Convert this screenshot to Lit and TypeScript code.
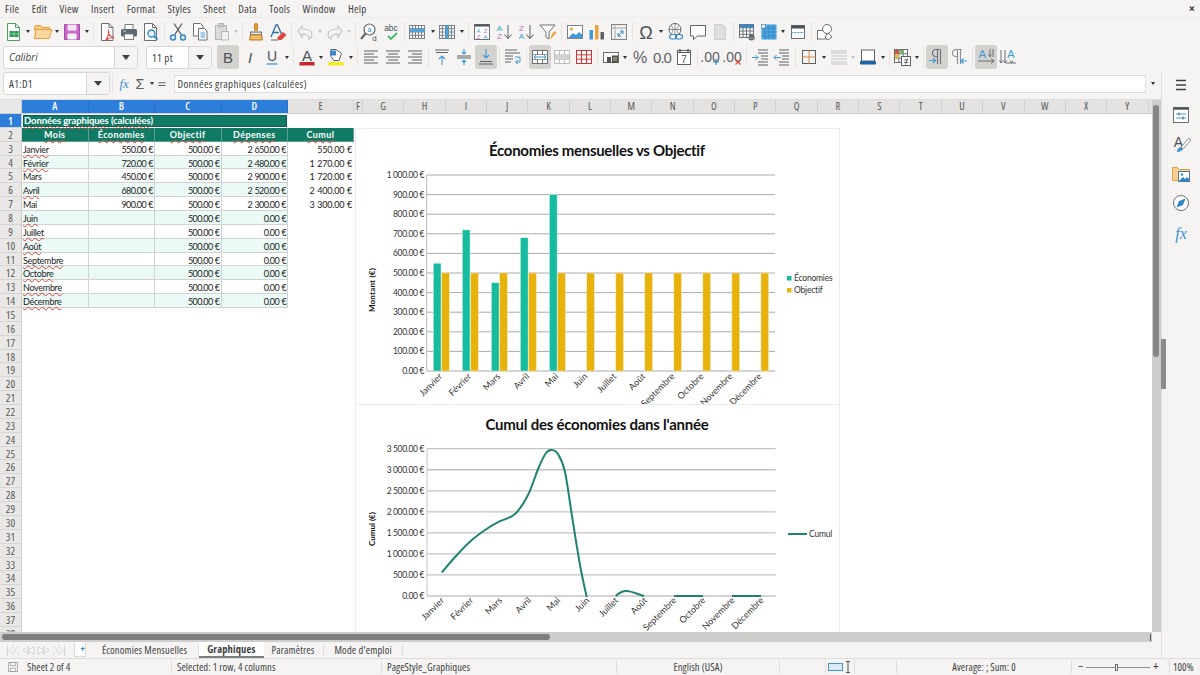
import { LitElement, css, html, svg } from 'lit'
import { customElement } from 'lit/decorators.js'

const GREY = '#5c6166'
const BLUE = '#3f9ad6'

// horizontal text lines used by the alignment style icons
const lines = (rows: [number, number, number][], color = GREY) =>
  rows.map(([a, b, y]) => svg`<path d="M${a} ${y}H${b}" stroke=${color} stroke-width="1"/>`)

const gridCells = (x: number, y: number, w: number, h: number, cols: number, rows: number, color: string) => svg`
  <rect x=${x} y=${y} width=${w} height=${h} fill="#fff" stroke=${color}/>
  ${Array.from({ length: cols - 1 }, (_, i) => svg`<path d="M${x + ((i + 1) * w) / cols} ${y}v${h}" stroke=${color}/>`)}
  ${Array.from({ length: rows - 1 }, (_, i) => svg`<path d="M${x} ${y + ((i + 1) * h) / rows}h${w}" stroke=${color}/>`)}
`

const label = (x: number, y: number, size: number, color: string, t: string, extra = '') =>
  svg`<text x=${x} y=${y} font-size=${size} fill=${color} font-family="Liberation Sans, sans-serif" font-style=${extra === 'i' ? 'italic' : 'normal'} font-weight=${extra === 'b' ? 'bold' : 'normal'} text-anchor="middle">${t}</text>`

const icons: Record<string, unknown> = {
  new: svg`<path d="M4.5 1.5h8l4 4v13h-12z" fill="#fff" stroke="#4f9f62"/><path d="M12.5 1.5v4h4" fill="none" stroke="#4f9f62"/><rect x="6.5" y="9" width="9" height="6" fill="#2f9a52"/><path d="M7 12h8M11 9v6" stroke="#a8dcb6" stroke-width=".7"/>`,
  open: svg`<path d="M1.5 5.5l1-2h5l2 2h7v3h-15z" fill="#f6c684" stroke="#e39f3a"/><path d="M1.5 16.5l1.5-9h16l-3 9z" fill="#fbd79f" stroke="#e39f3a"/>`,
  save: svg`<path d="M2.5 2.5h15v15h-15z" fill="#c76ac9" stroke="#a84cab"/><rect x="5.5" y="2.5" width="9" height="6" fill="#f4e3f4"/><rect x="5.5" y="11.5" width="9" height="6" fill="#f9f0f9"/>`,
  pdf: svg`<path d="M4.5 1.5h7.5l4 4v13h-11.500z" fill="#fff" stroke="#6b7075"/><path d="M12 1.500v4h4" fill="none" stroke="#6b7075"/><path d="M9 18c2-3 3-7 2.500-9-1 3 2 6 5.500 6.500-3 0-6 1-8 2.500z" fill="none" stroke="#d9463e" stroke-width="1.200"/>`,
  print: svg`<rect x="6" y="2.500" width="8" height="5" fill="#fff" stroke="#7a7f84"/><rect x="2" y="7" width="16" height="7.500" rx="1.500" fill="#5e6a73"/><rect x="5.500" y="12" width="9" height="5.500" fill="#fff" stroke="#7a7f84"/><path d="M4 9h3" stroke="#cfd3d6"/>`,
  preview: svg`<path d="M3.500 1.500h8l4 4v13h-12z" fill="#fff" stroke="#6b7075"/><path d="M11.500 1.500v4h4" fill="none" stroke="#6b7075"/><circle cx="10.500" cy="11.500" r="3.500" fill="#e7f3fb" stroke="#2f86c4" stroke-width="1.300"/><path d="M13 14l3.500 3.500" stroke="#2f86c4" stroke-width="1.800"/>`,
  cut: svg`<path d="M6 1.500l7.500 11.500M14 1.500L6.500 13" stroke="#4b5157" stroke-width="1.200" fill="none"/><circle cx="5" cy="15.500" r="2.500" fill="none" stroke="#2f86c4" stroke-width="1.400"/><circle cx="15" cy="15.500" r="2.500" fill="none" stroke="#2f86c4" stroke-width="1.400"/>`,
  copy: svg`<path d="M3.500 1.500h7l2.500 2.500v10h-9.500z" fill="#fff" stroke="#6b7075"/><path d="M8.500 6.500h6l2.500 2.500v9h-8.500z" fill="#fff" stroke="#6b7075"/><path d="M10.500 11h4.500M10.500 13h4.500M10.500 15h4.500" stroke="#3f9ad6"/>`,
  paste: svg`<rect x="3.500" y="3.500" width="11" height="14" fill="#dcdcda" stroke="#b5b5b3"/><rect x="6.500" y="1.500" width="5" height="3.500" fill="#c8c8c6" stroke="#b5b5b3"/><rect x="9.500" y="9.500" width="7" height="8.500" fill="#f1f1f0" stroke="#b5b5b3"/>`,
  clone: svg`<rect x="8.500" y="1.500" width="3" height="7" rx="1.200" fill="#e8a33d" stroke="#b97a1c"/><path d="M4.500 10h11v3h-11z" fill="#e4e4e2" stroke="#5c6166"/><path d="M4.500 13h11l1 5H3.500z" fill="#f2b964" stroke="#b97a1c"/>`,
  clear: svg`<path d="M3 15L8 3h1.500l4 9M5 10.500h6" fill="none" stroke="#2e6da4" stroke-width="1.300"/><path d="M9 16l6-6 3.500 3-5 5h-3z" fill="#e0463f"/><path d="M3 18h7" stroke="#5c6166"/>`,
  undo: svg`<path d="M3 9l4-5v3c6 0 10 2 10 6 0 2-1 3-3 4 1-3-2-5-7-5v3z" fill="none" stroke="#c2c2c0" stroke-width="1.100"/>`,
  redo: svg`<path d="M17 9l-4-5v3C7 7 3 9 3 13c0 2 1 3 3 4-1-3 2-5 7-5v3z" fill="none" stroke="#c2c2c0" stroke-width="1.100"/>`,
  find: svg`<circle cx="10.500" cy="7.500" r="5.500" fill="#fff" stroke="#5c6166" stroke-width="1.200"/><path d="M6.500 11.500L2 17" stroke="#5c6166" stroke-width="2"/>${label(10.5, 10, 7, '#2f86c4', 'a')}${label(15.5, 18.5, 8, '#4b5157', 'd')}`,
  spell: svg`${label(10, 9, 8.5, '#4b5157', 'abc')}<path d="M7 14l3 3 6-6" fill="none" stroke="#3fb56a" stroke-width="1.800"/>`,
  rows: svg`${gridCells(1.5, 3.5, 15, 13, 5, 4, '#7c8288')}<rect x="1.500" y="6.700" width="15" height="3.300" fill="#4ba3e0"/>`,
  cols: svg`${gridCells(1.5, 3.5, 15, 13, 5, 4, '#7c8288')}<rect x="7.500" y="3.500" width="3" height="13" fill="#4ba3e0"/>`,
  sort: svg`<rect x="2.500" y="2.500" width="15" height="15" fill="#fff" stroke="#6b7075"/><rect x="2.500" y="2.500" width="15" height="2" fill="#4b5157"/>${label(6.5, 10.5, 6, '#3f9ad6', 'A')}${label(6.5, 16.5, 6, '#c767c9', 'Z')}${label(13.5, 10.5, 6, '#c767c9', 'Z')}${label(13.5, 16.5, 6, '#3f9ad6', 'A')}`,
  asc: svg`${label(5.5, 8.5, 8, '#3f9ad6', 'A')}${label(5.5, 17, 8, '#c767c9', 'Z')}<path d="M14 3v13M10.500 12.500l3.500 4 3.500-4" fill="none" stroke="#6b7075" stroke-width="1.100"/>`,
  desc: svg`${label(5.5, 8.5, 8, '#c767c9', 'Z')}${label(5.5, 17, 8, '#3f9ad6', 'A')}<path d="M14 3v13M10.500 12.500l3.500 4 3.500-4" fill="none" stroke="#6b7075" stroke-width="1.100"/>`,
  filter: svg`<path d="M2 3h15l-6 7v7l-3-2v-5z" fill="#fff" stroke="#6b7075"/><path d="M12 18l2-6 3-3 1.500 2-3 3z" fill="#eba43b"/>`,
  image: svg`<rect x="2.500" y="3.500" width="15" height="13" fill="#fff" stroke="#7c8288"/><circle cx="6.500" cy="7" r="1.500" fill="#eba43b"/><path d="M3 16l5-5 3 2 3-3 3.500 3v3z" fill="#3f9ad6"/>`,
  chart: svg`<rect x="2.500" y="8" width="3.500" height="9.500" fill="#3f9ad6"/><rect x="8" y="3" width="3.500" height="14.500" fill="#eba43b"/><rect x="13.500" y="10" width="3.500" height="7.500" fill="#5c6166"/>`,
  pivot: svg`<rect x="2.500" y="2.500" width="15" height="15" fill="#f3f3f2" stroke="#7c8288"/><path d="M2.500 6h15M6 2.500v15" stroke="#a6aaad"/><path d="M9 14l5-5M14 9v3M14 9h-3M9 14v-3M9 14h3" stroke="#2f86c4" fill="none"/>`,
  omega: svg`${label(10, 17, 18, '#4b5157', 'Ω')}`,
  link: svg`<circle cx="9" cy="7.500" r="6" fill="#fff" stroke="#5c6166"/><path d="M3 7.500h12M9 1.500v12M5.500 3.500c2 3 2 5 0 8M12.500 3.500c-2 3-2 5 0 8" fill="none" stroke="#5c6166" stroke-width=".7"/><rect x="3.500" y="12.500" width="7" height="4.500" rx="2.200" fill="#fff" stroke="#2f86c4" stroke-width="1.100"/><rect x="9.500" y="12.500" width="7" height="4.500" rx="2.200" fill="none" stroke="#2f86c4" stroke-width="1.100"/>`,
  comment: svg`<path d="M2.500 3.500h15v10.500h-8l-4 3.500v-3.500h-3z" fill="#fff" stroke="#5c6166"/>`,
  headers: svg`<path d="M4.500 2.500h8l3 3v12h-11z" fill="#dededc" stroke="#d0d0ce"/>`,
  freeze: svg`${gridCells(2.5, 2.5, 14, 13, 4, 4, '#6b7075')}<rect x="2.500" y="2.500" width="14" height="3.200" fill="#3f86c4"/><circle cx="14.500" cy="15.500" r="3" fill="#5c6166"/><rect x="11.500" y="15" width="6" height="2.500" fill="#7c8288"/>`,
  split: svg`<rect x="2.500" y="2.500" width="15" height="15" fill="#4ba3e0"/><path d="M2.500 6h15M2.500 10h15M2.500 14h15M6 2.500v15M10 2.500v15M14 2.500v15" stroke="#1c6aa3" stroke-width=".6" stroke-dasharray="1 1"/><rect x="2.500" y="2.500" width="4" height="3.500" fill="#fff" stroke="#1c6aa3" stroke-width=".5"/>`,
  window: svg`<rect x="3.500" y="3.500" width="13" height="13" fill="#fff" stroke="#6b7075"/><rect x="3.500" y="3.500" width="13" height="3" fill="#4b5157"/><path d="M3.500 10.500h13" stroke="#3f9ad6" stroke-dasharray="2 1"/>`,
  shapes: svg`<rect x="2.500" y="8.500" width="9" height="8.500" fill="#fff" stroke="#6b7075"/><circle cx="12" cy="7" r="4.500" fill="#fff" stroke="#6b7075"/><path d="M13 11l4 4-4 3-3-3z" fill="#fff" stroke="#6b7075"/>`,
  bold: svg`${label(10, 15.5, 15, '#4b5157', 'B')}`,
  italic: svg`${label(10, 15.5, 15, '#4b5157', 'I', 'i')}`,
  under: svg`${label(10, 14, 14, '#4b5157', 'U')}<path d="M4.500 17h11" stroke="#3f9ad6" stroke-width="1.300"/>`,
  fcolor: svg`${label(10, 13.5, 15, '#4b5157', 'A')}<rect x="2.500" y="15" width="15" height="3.500" fill="#c9262c"/>`,
  hcolor: svg`<path d="M5 2.500h5l5.500 4-2.500 7H8l-3-4z" fill="#fff" stroke="#5c6166"/><path d="M4 3.500h6v5H4z" fill="#3f86c4"/><rect x="2.500" y="15" width="15" height="3.500" fill="#f5ee1f"/>`,
  left: lines([[3, 17, 4], [3, 13, 7], [3, 17, 10], [3, 13, 13], [3, 17, 16]]),
  center: lines([[3, 17, 4], [5, 15, 7], [3, 17, 10], [5, 15, 13], [3, 17, 16]]),
  right: lines([[3, 17, 4], [7, 17, 7], [3, 17, 10], [7, 17, 13], [3, 17, 16]]),
  vtop: svg`${lines([[3, 17, 3], [4, 16, 5.5]])}<path d="M10 18V9M7 12l3-3 3 3" fill="none" stroke=${BLUE} stroke-width="1.100"/>`,
  vmid: svg`${lines([[3, 17, 9], [3, 17, 11]])}<path d="M10 2v5M8 5l2 2 2-2M10 18v-5M8 15l2-2 2 2" fill="none" stroke=${BLUE} stroke-width="1.100"/>`,
  vbot: svg`${lines([[4, 16, 14.500], [3, 17, 17]])}<path d="M10 2v9M7 8l3 3 3-3" fill="none" stroke=${BLUE} stroke-width="1.100"/>`,
  wrap: svg`${lines([[2, 14, 3], [2, 17, 6], [2, 10, 9], [2, 10, 12], [2, 8, 15]])}<path d="M12 10h5v5h-4M15 13l-2.500 2 2.500 2" fill="none" stroke=${BLUE}/>`,
  merge: svg`${gridCells(2.5, 3.5, 15, 13, 3, 3, '#6b7075')}<rect x="3" y="8" width="14" height="4" fill="#fff"/><path d="M4 10h12M6 8l-2 2 2 2M14 8l2 2-2 2" fill="none" stroke=${BLUE}/>`,
  mergeoff: svg`${gridCells(2.5, 3.5, 15, 13, 3, 3, '#bdbdbb')}<rect x="3" y="7.500" width="14" height="5" fill="#d3d3d1"/>`,
  unmerge: svg`${gridCells(2.5, 3.5, 15, 13, 3, 3, '#c9363a')}`,
  numfmt: svg`<rect x="2.500" y="5.500" width="15" height="10" fill="#fff" stroke="#6b7075"/><rect x="6" y="10" width="4" height="6" fill="#4b5157"/><rect x="11" y="8.500" width="6" height="7.500" fill="#4b5157"/><path d="M12 11h4M12 13h4" stroke="#d8c46a"/>`,
  percent: svg`${label(10, 16, 16, '#5c6166', '%')}`,
  number: svg`<text x="10" y="16" font-size="15" fill="#5c6166" font-family="Liberation Sans, sans-serif" letter-spacing="-1" text-anchor="middle">0.0</text>`,
  date: svg`<rect x="3.500" y="3.500" width="13" height="14" fill="#fff" stroke="#5c6166"/><path d="M3.500 5.500h13M6 2v3M14 2v3" stroke="#4b5157" stroke-width="1.200"/>${label(10, 15.5, 10, '#4b5157', '7')}`,
  adddec: svg`${label(9, 15, 14, '#5c6166', '.00')}<path d="M15 12v6M12 15h6" stroke="#2f86c4" stroke-width="1.200"/>`,
  deldec: svg`${label(9, 15, 14, '#5c6166', '.00')}<path d="M12.500 12.500l5 5M17.500 12.500l-5 5" stroke="#d9463e" stroke-width="1.200"/>`,
  indent: svg`${lines([[8, 18, 3], [8, 18, 6], [11, 18, 9], [11, 18, 12], [8, 18, 15], [8, 18, 18]])}<path d="M2 10.500h6M5.500 8l2.500 2.500-2.500 2.500" fill="none" stroke=${BLUE}/>`,
  outdent: svg`${lines([[7, 17, 3], [7, 17, 6], [10, 17, 9], [10, 17, 12], [7, 17, 15], [7, 17, 18]])}<path d="M2 10.500h7M4.500 8L2 10.500 4.500 13" fill="none" stroke=${BLUE}/>`,
  border: svg`<rect x="3.500" y="3.500" width="13" height="13" fill="none" stroke="#5c6166"/><path d="M10 3.500v13M3.500 10h13" stroke="#d98a3a"/>`,
  bstyle: lines([[2, 18, 4], [2, 18, 6], [2, 18, 9], [2, 18, 12], [2, 18, 15], [2, 18, 17]], '#c4c4c2'),
  bcolor: svg`<rect x="3.500" y="3" width="13" height="11" fill="#fff" stroke="#5c6166"/><rect x="2" y="14" width="16" height="3.500" rx="1" fill="#1d63a8"/>`,
  cond: svg`${gridCells(1.5, 2.5, 13, 13, 3, 3, '#6b7075')}<rect x="2" y="3" width="4" height="4" fill="#d6504a"/><rect x="2" y="7.500" width="4" height="4" fill="#e8b94a"/><rect x="6.500" y="3" width="4" height="4" fill="#6cb36b"/><rect x="8.500" y="9.500" width="9" height="9" fill="#fff" stroke="#5c6166"/><path d="M11 13h4M11 15.500h4M14.500 11.500l-2 6" stroke="#4b5157" stroke-width=".8"/>`,
  ltr: svg`<path d="M13 2.500H9a3.500 3.500 0 0 0 0 7h1.500M10.500 2.500V17M13.500 2.500V17" fill="none" stroke="#6b7075" stroke-width="1.100"/><path d="M2 13.500h6.500M6 11l2.500 2.500L6 16" fill="none" stroke=${BLUE} stroke-width="1.200"/>`,
  rtl: svg`<path d="M13 2.500H7a3.500 3.500 0 0 0 0 7h1.500M8.500 2.500V17M11.500 2.500V17" fill="none" stroke="#8a8f93" stroke-width="1.100"/><path d="M18 14h-6M14.500 11.500L12 14l2.500 2.500" fill="none" stroke=${BLUE} stroke-width="1.200"/>`,
  horiz: svg`${label(6.5, 10.5, 11, BLUE, 'A')}<path d="M2 14h16M15 11.500l3 2.500-3 2.500M14 2v8M17 2v8M12.500 7.500l1.500 2 1.500-2" fill="none" stroke="#5c6166" stroke-width=".9"/>`,
  vert: svg`${label(13, 10.500, 11, BLUE, 'A')}<path d="M3 3v13M1.500 13.500L3 16l1.500-2.500M7 3v13M5.500 13.500L7 16l1.500-2.500M8 16h10M12 13.500l1.500 2.500 1.500-2.500" fill="none" stroke="#5c6166" stroke-width=".9"/>`,
  hamburger: svg`<path d="M5 5.500h10M5 10h10M5 14.500h10" stroke="#3e4347" stroke-width="1.500"/>`,
  props: svg`<rect x="2.500" y="2.500" width="15" height="15" fill="#fff" stroke="#6b7075"/><rect x="2.500" y="2.500" width="15" height="2.200" fill="#4b5157"/><path d="M5 9h10M5 13h10" stroke=${BLUE}/><path d="M8 7.500v3M12 11.500v3" stroke="#4b5157"/>`,
  styles: svg`${label(7.5, 13, 14, '#4b5157', 'A')}<path d="M18 4l-7 8-1 3 3-1 7-8z" fill="#fff" stroke="#6b7075" stroke-width=".8"/><path d="M9 13c-2 1-3 3-3 5 2 0 5-1 6-3z" fill="#3f8fd2"/>`,
  gallery: svg`<path d="M1.500 16.500v-13h5l2 2h10v11z" fill="#f8cf97" stroke="#e39f3a"/><rect x="7.500" y="7.500" width="11" height="10" fill="#fff" stroke="#4b7aa3"/><path d="M8 17l4-4 2 2 2-2 2 2v2z" fill="#2f86c4"/><circle cx="11" cy="10.500" r="1.200" fill="#2f86c4"/>`,
  nav: svg`<circle cx="10" cy="10" r="7.500" fill="#fff" stroke="#6b7075"/><path d="M14.500 5.500l-2.500 6.500-6.500 2.500 2.500-6.500z" fill="#2f86c4"/>`,
  fx: svg`<text x="10" y="15.500" font-size="16" fill="#3f8fd2" font-style="italic" font-family="Liberation Serif, serif" text-anchor="middle">fx</text>`,
  sigma: svg`${label(10, 16.5, 18, '#5c6166', 'Σ')}`,
  equals: svg`<path d="M4 8h12M4 12.500h12" stroke="#4b5157" stroke-width="1.500"/>`,
  first: svg`<path d="M1.500 2v12M9 3L3 8l6 5M14 3L8 8l6 5" fill="none" stroke="#d4d3d1"/>`,
  prev: svg`<path d="M14 4L6 8l8 4zM8 4L2 8l6 4z" fill="none" stroke="#d4d3d1"/>`,
  next: svg`<path d="M2 4l8 4-8 4zM8 4l6 4-6 4z" fill="none" stroke="#d4d3d1"/>`,
  last: svg`<path d="M14.500 2v12M7 3l6 5-6 5M2 3l6 5-6 5" fill="none" stroke="#d4d3d1"/>`,
}

const toolbar1 = ['new', 'd', 'open', 'd', 'save', 'd', '|', 'pdf', 'print', 'preview', '|', 'cut', 'copy', 'paste', 'dx', '|', 'clone', 'clear', '|', 'undo', 'dx', 'redo', 'dx', '|', 'find', 'spell', '|', 'rows', 'd', 'cols', 'd', '|', 'sort', 'asc', 'desc', 'filter', '|', 'image', 'chart', 'pivot', '|', 'omega', 'd', 'link', 'comment', 'headers', '|', 'freeze', 'split', 'd', 'window', '|', 'shapes']
const toolbar2 = ['bold*', 'italic', 'under', 'd', '|', 'fcolor', 'd', 'hcolor', 'd', '|', 'left', 'center', 'right', '|', 'vtop', 'vmid', 'vbot*', '|', 'wrap', '|', 'merge*', 'mergeoff', 'unmerge', '|', 'numfmt', 'd', 'percent', 'number', 'date', '|', 'adddec', 'deldec', '|', 'indent', 'outdent', '|', 'border', 'd', 'bstyle', 'dx', 'bcolor', 'd', '|', 'cond', 'd', '|', 'ltr*', 'rtl', '|', 'horiz*', 'vert']

const menus = ['File', 'Edit', 'View', 'Insert', 'Format', 'Styles', 'Sheet', 'Data', 'Tools', 'Window', 'Help']
const columns = ['E', 'F', 'G', 'H', 'I', 'J', 'K', 'L', 'M', 'N', 'O', 'P', 'Q', 'R', 'S', 'T', 'U', 'V', 'W', 'X', 'Y']
const months = ['Janvier', 'Février', 'Mars', 'Avril', 'Mai', 'Juin', 'Juillet', 'Août', 'Septembre', 'Octobre', 'Novembre', 'Décembre']
const savings = ['550.00 €', '720.00 €', '450.00 €', '680.00 €', '900.00 €']
const spending = ['2 650.00 €', '2 480.00 €', '2 900.00 €', '2 520.00 €', '2 300.00 €']
const cumul = ['550.00 €', '1 270.00 €', '1 720.00 €', '2 400.00 €', '3 300.00 €']
const clean = ['Mars', 'Mai']

// smooth line through the points, as the chart draws it
const smooth = (p: number[][]) => {
  let d = `M${p[0][0]} ${p[0][1]}`
  for (let i = 0; i < p.length - 1; i++) {
    const a = p[i - 1] || p[i]
    const b = p[i]
    const c = p[i + 1]
    const e = p[i + 2] || c
    d += `C${b[0] + (c[0] - a[0]) / 6} ${b[1] + (c[1] - a[1]) / 6} ${c[0] - (e[0] - b[0]) / 6} ${c[1] - (e[1] - b[1]) / 6} ${c[0]} ${c[1]}`
  }
  return d
}

const curve = [[441.7, 572.5], [456, 556], [470.7, 541], [485, 530], [499, 521.7], [515, 514], [528, 495], [538.5, 468], [546, 453], [551.7, 450], [558, 454], [565, 472], [572, 516], [580, 565], [586.7, 597]]

@customElement('app-root')
export class AppRoot extends LitElement {
  static styles = css`
    :host {
      display: flex;
      flex-direction: column;
      width: 1200px;
      height: 675px;
      overflow: hidden;
      background: #f5f4f2;
      font-family: 'Open Sans', sans-serif;
      font-stretch: 75%;
      font-size: 10.5px;
      color: #3d3f42;
    }
    .menu {
      height: 17px;
      display: flex;
      align-items: center;
      padding-left: 5px;
      gap: 12.4px;
      font-size: 11px;
      letter-spacing: 0.25px;
      flex: none;
    }
    .close {
      margin-left: auto;
      margin-right: 5px;
      font-size: 12px;
      font-weight: bold;
    }
    .bar {
      display: flex;
      align-items: center;
      flex: none;
    }
    .bar1 {
      height: 28px;
      padding-left: 2px;
      border-top: 1px solid #ecebe9;
      box-sizing: border-box;
    }
    .bar2 {
      height: 27px;
      padding: 0 0 3px 3px;
      box-sizing: border-box;
    }
    .btn {
      width: 22px;
      height: 24px;
      flex: none;
      display: flex;
      align-items: center;
      justify-content: center;
      border-radius: 3px;
    }
    .btn.on {
      background: #d4d2cf;
    }
    .ic {
      width: 20px;
      height: 20px;
      display: block;
    }
    .dd {
      width: 7.5px;
      flex: none;
      display: flex;
      justify-content: center;
    }
    .dd::before {
      content: '';
      border-left: 2.5px solid transparent;
      border-right: 2.5px solid transparent;
      border-top: 3px solid #2e3033;
    }
    .dd.off::before {
      border-top-color: #c2c2c0;
    }
    .sep {
      width: 5px;
      height: 20px;
      flex: none;
      display: flex;
      justify-content: center;
    }
    .sep::before {
      content: '';
      width: 1px;
      background: #e6e5e3;
    }
    .combo {
      display: flex;
      height: 23px;
      box-sizing: border-box;
      border: 1px solid #d8d7d5;
      border-radius: 3px;
      background: #fff;
      flex: none;
      overflow: hidden;
    }
    .combo span {
      flex: 1;
      padding-left: 5px;
      line-height: 21px;
      font-size: 11px;
      letter-spacing: 0.3px;
    }
    .combo b {
      width: 22px;
      background: #f5f4f2;
      border-left: 1px solid #d8d7d5;
      display: flex;
      align-items: center;
      justify-content: center;
    }
    .combo b::before {
      content: '';
      border-left: 4px solid transparent;
      border-right: 4px solid transparent;
      border-top: 5px solid #3d3f42;
    }
    .font {
      width: 135px;
      margin-right: 8px;
    }
    .combo.font span {
      font-style: italic;
      font-stretch: 100%;
      font-size: 10px;
      letter-spacing: 0;
    }
    .size {
      width: 66px;
      margin-right: 5px;
    }
    .body {
      flex: 1;
      min-height: 0;
      display: flex;
    }
    .left {
      width: 1161px;
      flex: none;
      display: flex;
      flex-direction: column;
      box-shadow: 1px 0 0 #e2e1df;
      position: relative;
      z-index: 1;
    }
    .side {
      flex: 1;
      display: flex;
      flex-direction: column;
      align-items: center;
      padding-top: 3px;
      gap: 9.5px;
    }
    .fbar {
      height: 28px;
      padding: 0 0 4px 3px;
      border-bottom: 1px solid #dddcda;
      box-sizing: border-box;
    }
    .name {
      width: 107px;
    }
    .fbar .btn {
      width: 16px;
    }
    .fbar .fxb {
      margin-left: 1px;
    }
    .fbar .eq {
      width: 12px;
      margin-right: 6px;
    }
    .input {
      width: 972px;
      height: 18px;
      box-sizing: border-box;
      background: #fff;
      border: 1px solid #dcdbd9;
      font-size: 11px;
      letter-spacing: 0.3px;
      line-height: 16px;
      padding-left: 3px;
    }
    .fbar .dd {
      width: 7.5px;
    }
    .fbar .end {
      width: 14px;
    }
    .sheet {
      flex: 1;
      min-height: 0;
      display: flex;
      position: relative;
      background: #fff;
    }
    .grid {
      width: 1152px;
      overflow: hidden;
      position: relative;
    }
    .heads {
      display: flex;
      height: 14px;
      box-sizing: border-box;
      background: #e4e3e1;
      border-bottom: 1px solid #cfcecc;
      font-size: 10.5px;
      color: #55585b;
    }
    .heads span {
      width: 41.35px;
      flex: none;
      text-align: center;
      line-height: 13px;
      border-right: 1px solid #d2d1cf;
      box-sizing: border-box;
    }
    .heads .corner {
      width: 22px;
      background: #e9e8e6;
    }
    .heads .c {
      width: 66.5px;
    }
    .heads .sel {
      background: #2d7ddb;
      color: #fff;
      border-right-color: #2a6fc0;
      font-weight: 600;
    }
    .heads .e {
      width: 66px;
    }
    .heads .f {
      width: 9px;
    }
    .table {
      display: grid;
      grid-template-columns: 22px repeat(4, 66.5px) 66px;
      grid-auto-rows: 13.86px;
      font-family: Lato, sans-serif;
      font-stretch: normal;
      font-size: 9px;
      color: #222;
    }
    .rh {
      background: #e9e8e6;
      border-right: 1px solid #cfcecc;
      border-bottom: 1px solid #d6d5d3;
      box-sizing: border-box;
      color: #55585b;
      text-align: center;
      font-family: 'Open Sans', sans-serif;
      font-stretch: 75%;
      font-size: 11px;
      line-height: 14px;
      grid-column: 1;
    }
    .rh.sel {
      background: #2d7ddb;
      color: #fff;
      font-weight: 600;
    }
    .cell {
      box-sizing: border-box;
      border-right: 1px solid #cfd4d2;
      border-bottom: 1px solid #cfd4d2;
      padding: 0 1px;
      line-height: 15.5px;
      white-space: nowrap;
      letter-spacing: -0.3px;
    }
    .num {
      text-align: right;
      letter-spacing: -0.6px;
      word-spacing: 0.6px;
    }
    .tint {
      background: #ecfaf7;
    }
    .title {
      grid-column: 2 / span 4;
      background: #117a65;
      color: #fff;
      font-weight: bold;
      font-size: 9.5px;
      border: 1px solid #fff;
      outline: 1px solid #0d5f4f;
      outline-offset: -2px;
      line-height: 12px;
      letter-spacing: -0.1px;
    }
    .gap {
      grid-column: 6;
    }
    .th {
      background: #117a65;
      color: #fff;
      font-weight: bold;
      text-align: center;
      letter-spacing: 0.4px;
      line-height: 13px;
      border-color: #5a9f91;
    }
    .sum {
      border: 0;
      letter-spacing: -0.2px;
      padding-right: 2px;
    }
    .plain {
      border: 0;
    }
    /* positioned so the next row's fill does not cover the wave */
    .sp {
      position: relative;
      z-index: 1;
      text-decoration: underline wavy #d8413b 1px;
      text-decoration-skip-ink: none;
      text-underline-offset: 1px;
    }
    .chart {
      position: absolute;
      left: 355px;
      top: 28px;
      width: 486px;
      height: 506px;
      display: block;
      z-index: 2;
    }
    .chart text {
      font-family: Lato, sans-serif;
      font-stretch: normal;
    }
    .chart .tick {
      letter-spacing: -0.35px;
    }
    .chart .leg {
      letter-spacing: -0.2px;
    }
    .vs {
      width: 9px;
      background: #cdcdcb;
      display: flex;
      position: relative;
    }
    .vs::before {
      content: '';
      width: 6px;
      height: 252px;
      margin: 5px 0 0 1px;
      border-radius: 3px;
      background: #868686;
    }
    .grip {
      position: absolute;
      left: 9px;
      top: 239px;
      width: 5px;
      height: 50px;
      background: #8c8c8c;
    }
    .hs {
      height: 10px;
      flex: none;
      background: #cdcdcb;
      display: flex;
      align-items: center;
      justify-content: space-between;
      padding: 0 1px 0 2px;
      margin-right: 9px;
    }
    .hs::before {
      content: '';
      width: 548px;
      height: 6px;
      border-radius: 3px;
      background: #7e7e7e;
    }
    .hs::after {
      content: '';
      width: 1px;
      height: 7px;
      background: #555;
    }
    .tabs {
      height: 16px;
      flex: none;
      display: flex;
      align-items: stretch;
      font-size: 10.5px;
      letter-spacing: 0.15px;
      line-height: 15px;
    }
    .nav {
      width: 60px;
      margin-left: 6px;
      display: flex;
      align-items: center;
      gap: 0;
    }
    .nav svg {
      width: 15px;
      height: 15px;
    }
    .add {
      width: 12px;
      height: 15px;
      margin-left: 8px;
      background: #fff;
      border: 1px solid #dcdbd9;
      border-top: 0;
      box-sizing: border-box;
      color: #2f86c4;
      text-align: right;
      font-weight: bold;
      line-height: 13px;
      font-size: 9px;
    }
    .tab {
      padding: 0 8px;
      border-right: 1px solid #dddcda;
      margin: 2px 0;
      line-height: 12px;
    }
    .tab.first {
      padding-left: 16px;
      padding-right: 11px;
    }
    .tab.on {
      background: #fff;
      font-weight: bold;
      border-right: 0;
      border-bottom: 2px solid #7d8082;
      margin: 0;
      line-height: 15px;
      box-sizing: border-box;
    }
    .tab.last {
      padding-left: 11px;
      padding-right: 10px;
    }
    .status {
      height: 17px;
      flex: none;
      display: grid;
      grid-template-columns: 172px 210px 235px 163px 46px 29px 42px 175px 98px auto;
      align-items: center;
      border-top: 1px solid #dddcda;
      box-sizing: border-box;
      font-size: 10.5px;
      letter-spacing: 0.08px;
    }
    .status > div {
      height: 14px;
      line-height: 14px;
      border-right: 1px solid #dfdedc;
      white-space: nowrap;
      display: flex;
      align-items: center;
      box-sizing: border-box;
    }
    .mid {
      justify-content: center;
    }
    .st1 {
      padding-left: 7px;
      gap: 8px;
    }
    .st1 svg {
      width: 12px;
      height: 12px;
    }
    .pad {
      padding-left: 5px;
    }
    .slider {
      gap: 3px;
      padding-left: 6px;
    }
    .slider i {
      width: 64px;
      height: 1px;
      background: #8d8d8d;
      position: relative;
    }
    .slider i::after {
      content: '';
      position: absolute;
      left: 29px;
      top: -3px;
      width: 3px;
      height: 7px;
      background: #fff;
      border: 1px solid #6b6b6b;
      box-sizing: border-box;
    }
    .slider b {
      font-weight: normal;
      font-size: 12px;
      color: #333;
    }
    .status .zoom {
      border: 0;
      padding-left: 3px;
    }
  `

  private renderBar(items: string[]) {
    return items.map((it) => {
      if (it === '|') return html`<span class="sep"></span>`
      if (it === 'd') return html`<span class="dd"></span>`
      if (it === 'dx') return html`<span class="dd off"></span>`
      const on = it.endsWith('*')
      return html`<span class="btn ${on ? 'on' : ''}">${this.icon(on ? it.slice(0, -1) : it)}</span>`
    })
  }

  private icon(name: string) {
    return html`<svg class="ic" viewBox="0 0 20 20">${icons[name]}</svg>`
  }

  private word(text: string, check = true) {
    return check ? html`<span class="sp">${text}</span>` : text
  }

  private renderTable() {
    const rows = []
    rows.push(html`<div class="rh sel">1</div><div class="cell title"><span class="sp">Données</span> <span class="sp">graphiques</span> (<span class="sp">calculées</span>)</div><div class="gap"></div>`)
    rows.push(html`<div class="rh">2</div>`)
    for (const h of ['Mois', 'Économies', 'Objectif', 'Dépenses', 'Cumul']) {
      rows.push(html`<div class="cell th"><span class="sp">${h}</span></div>`)
    }
    months.forEach((m, i) => {
      const c = i % 2 === 1 ? 'tint' : ''
      rows.push(html`
        <div class="rh">${i + 3}</div>
        <div class="cell ${c}">${this.word(m, !clean.includes(m))}</div>
        <div class="cell num ${c}">${savings[i] ?? ''}</div>
        <div class="cell num ${c}">500.00 €</div>
        <div class="cell num ${c}">${spending[i] ?? '0.00 €'}</div>
        <div class="cell num sum">${cumul[i] ?? ''}</div>
      `)
    })
    for (let n = 15; n <= 38; n++) {
      rows.push(html`<div class="rh">${n}</div><div class="plain"></div>`)
    }
    return rows
  }

  private barsChart() {
    const left = 71.7
    const step = 29.03
    const bottom = 243
    const unit = 0.196
    return svg`
      <text x="242" y="28" font-size="15" font-weight="bold" letter-spacing="-0.3" text-anchor="middle" fill="#111">Économies mensuelles vs Objectif</text>
      ${Array.from({ length: 11 }, (_, i) => {
        const y = bottom - i * 19.6
        const v = i === 10 ? '1 000.00 €' : `${i * 100}.00 €`
        return svg`
          <path d="M${left} ${y}H420" stroke="#aaa" stroke-width="1"/>
          <text class="tick" x="69" y=${y + 3} font-size="8.500" text-anchor="end" fill="#333">${v}</text>`
      })}
      <path d="M${left} 47V${bottom}" stroke="#b9b9b9"/>
      ${months.map((m, i) => {
        const x = left + 6.6 + i * step
        const s = [550, 720, 450, 680, 900][i]
        return svg`
          ${s ? svg`<rect x=${x} y=${bottom - s * unit} width="7.700" height=${s * unit} fill="#17bba0" stroke="#d3f3ec" stroke-width=".5"/>` : ''}
          <rect x=${x + 8.300} y=${bottom - 500 * unit} width="7.700" height=${500 * unit} fill="#e8b20d" stroke="#f9ebbd" stroke-width=".5"/>
          <text transform="translate(${x + 9.500} ${bottom + 6}) rotate(-45)" font-size="9" text-anchor="end" fill="#333">${m}</text>`
      })}
      <text transform="translate(19.500 162) rotate(-90)" font-size="8" font-weight="bold" text-anchor="middle" fill="#111" letter-spacing=".2">Montant (€)</text>
      <rect x="432" y="148" width="4.500" height="4.500" fill="#17bba0"/>
      <text class="leg" x="439" y="153" font-size="8.500" fill="#333">Économies</text>
      <rect x="432" y="160" width="4.500" height="4.500" fill="#e8b20d"/>
      <text class="leg" x="439" y="165" font-size="8.500" fill="#333">Objectif</text>`
  }

  private lineChart() {
    const left = 427
    const bottom = 596
    const labels = ['0.00 €', '500.00 €', '1 000.00 €', '1 500.00 €', '2 000.00 €', '2 500.00 €', '3 000.00 €', '3 500.00 €']
    return svg`
      <g transform="translate(-355 -128)">
        <text x="597" y="430" font-size="15" font-weight="bold" letter-spacing="-0.25" text-anchor="middle" fill="#111">Cumul des économies dans l'année</text>
        ${labels.map((v, i) => {
          const y = bottom - i * 21.04
          return svg`
            <path d="M${left} ${y}H775.700" stroke="#c4c4c4" stroke-width="1.300"/>
            <text class="tick" x="424" y=${y + 3} font-size="8.500" text-anchor="end" fill="#333">${v}</text>`
        })}
        <path d="M${left} 448.700V${bottom}" stroke="#c4c4c4"/>
        ${months.map((m, i) => svg`<text transform="translate(${441.7 + i * 29.03 + 3} 601) rotate(-45)" font-size="9" text-anchor="end" fill="#333">${m}</text>`)}
        <path d=${smooth(curve)} fill="none" stroke="#1f8371" stroke-width="2"/>
        <path d="M615.700 596c4-4 8-5 11-5 5 0 10 3 17.500 5M674 596h29M732 596h29" fill="none" stroke="#1f8371" stroke-width="2"/>
        <text transform="translate(374.500 529) rotate(-90)" font-size="8" font-weight="bold" text-anchor="middle" fill="#111">Cumul (€)</text>
        <path d="M788 534h19" stroke="#1f8371" stroke-width="2"/>
        <text class="leg" x="809" y="536.500" font-size="8.500" fill="#333">Cumul</text>
      </g>`
  }

  render() {
    return html`
      <div class="menu">
        ${menus.map((m) => html`<span>${m}</span>`)}
        <span class="close">×</span>
      </div>
      <div class="bar bar1">${this.renderBar(toolbar1)}</div>
      <div class="bar bar2">
        <div class="combo font"><span>Calibri</span><b></b></div>
        <div class="combo size"><span>11 pt</span><b></b></div>
        ${this.renderBar(toolbar2)}
      </div>
      <div class="body">
        <div class="left">
          <div class="bar fbar">
            <div class="combo name"><span>A1:D1</span><b></b></div>
            <span class="sep"></span>
            <span class="btn fxb">${this.icon('fx')}</span>
            <span class="btn">${this.icon('sigma')}</span>
            <span class="dd"></span>
            <span class="btn eq">${this.icon('equals')}</span>
            <div class="input">Données graphiques (calculées)</div>
            <span class="dd end"></span>
          </div>
          <div class="sheet">
            <div class="grid">
              <div class="heads">
                <span class="corner"></span>
                ${['A', 'B', 'C', 'D'].map((c) => html`<span class="c sel">${c}</span>`)}
                ${columns.map((c) => html`<span class=${c === 'E' ? 'e' : c === 'F' ? 'f' : ''}>${c}</span>`)}
              </div>
              <div class="table">${this.renderTable()}</div>
              <svg class="chart" viewBox="0 0 486 506">
                <rect x=".5" y=".5" width="484" height="276" fill="#fff" stroke="#ececec"/>
                ${this.barsChart()}
                <rect x=".5" y="276.500" width="484" height="229" fill="#fff" stroke="#ececec"/>
                ${this.lineChart()}
              </svg>
            </div>
            <div class="vs"><span class="grip"></span></div>
          </div>
          <div class="hs"></div>
          <div class="tabs">
            <div class="nav">
              ${['first', 'prev', 'next', 'last'].map((n) => html`<svg viewBox="0 0 16 16">${icons[n]}</svg>`)}
            </div>
            <div class="add">+</div>
            <div class="tab first">Économies Mensuelles</div>
            <div class="tab on">Graphiques</div>
            <div class="tab">Paramètres</div>
            <div class="tab last">Mode d'emploi</div>
          </div>
        </div>
        <div class="side">
          ${['hamburger', 'props', 'styles', 'gallery', 'nav', 'fx'].map((n) => this.icon(n))}
        </div>
      </div>
      <div class="status">
        <div class="st1">
          <svg viewBox="0 0 20 20"><path d="M2.500 2.500h15v15h-15z" fill="#f0f0ef" stroke="#7c8288"/><path d="M6 2.500h8v5H6zM6 12h8v5.500H6z" fill="#fff" stroke="#7c8288"/></svg>
          Sheet 2 of 4
        </div>
        <div class="pad">Selected: 1 row, 4 columns</div>
        <div class="pad">PageStyle_Graphiques</div>
        <div class="mid">English (USA)</div>
        <div></div>
        <div class="mid">
          <svg width="24" height="12" viewBox="0 0 24 12"><rect x=".5" y="2.500" width="14" height="7" fill="#dcecf7" stroke="#4a93c8"/><path d="M18 .5h4M20 .5v11M18 11.500h4" stroke="#555" fill="none"/></svg>
        </div>
        <div></div>
        <div class="mid">Average: ; Sum: 0</div>
        <div class="slider"><b>−</b><i></i><b>+</b></div>
        <div class="zoom">100%</div>
      </div>
    `
  }
}
